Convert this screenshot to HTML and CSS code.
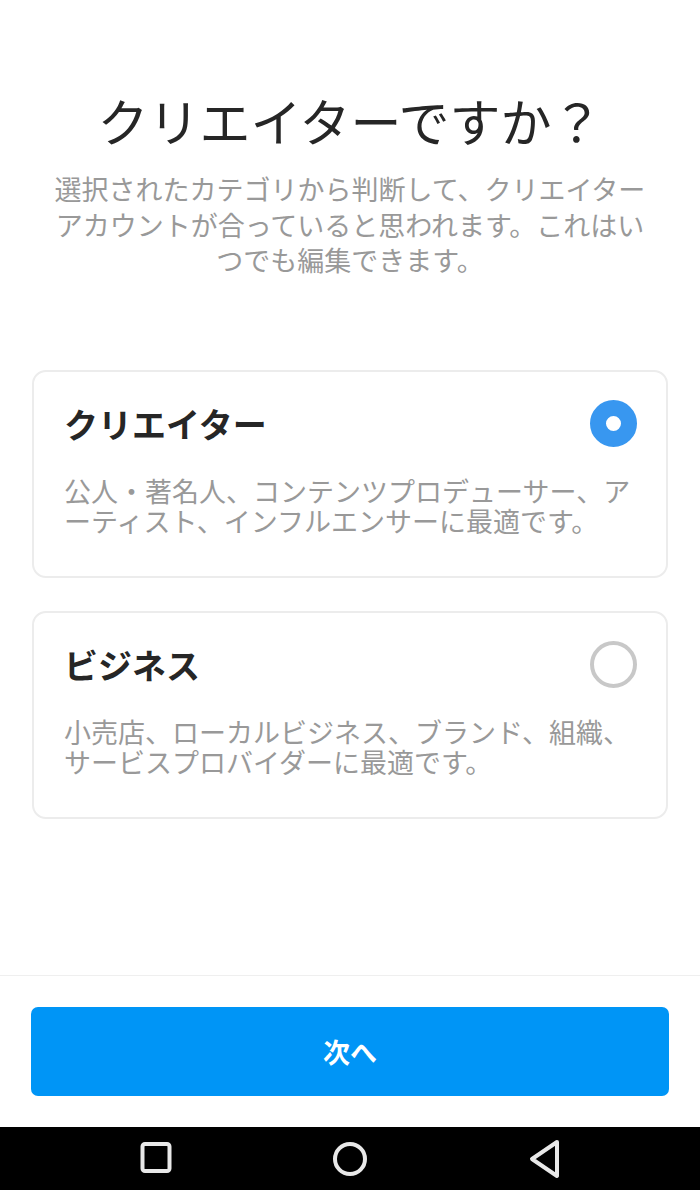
FILE: index.html
```html
<!DOCTYPE html>
<html lang="ja">
<head>
  <meta charset="UTF-8" />
  <meta name="viewport" content="width=device-width, initial-scale=1.0"/>
  <title>クリエイターですか？</title>
  <link rel="stylesheet" href="styles.css">
</head>
<body>

<div class="screen">
  <main class="content">
    <h1 class="title">クリエイターですか？</h1>
    <p class="lead">選択されたカテゴリから判断して、クリエイターアカウントが合っていると思われます。これはいつでも編集できます。</p>

    <div class="options">
      <label class="option">
        <div class="option-head">
          <span class="option-name">クリエイター</span>
          <span class="radio checked"></span>
        </div>
        <p class="option-desc">公人・著名人、コンテンツプロデューサー、アーティスト、インフルエンサーに最適です。</p>
      </label>

      <label class="option">
        <div class="option-head">
          <span class="option-name">ビジネス</span>
          <span class="radio"></span>
        </div>
        <p class="option-desc">小売店、ローカルビジネス、ブランド、組織、サービスプロバイダーに最適です。</p>
      </label>
    </div>
  </main>

  <footer class="footer">
    <button class="next">次へ</button>
  </footer>

  <nav class="navbar">
    <svg width="36" height="36" viewBox="0 0 36 36">
      <rect x="4.5" y="3" width="27" height="27" rx="2.5" fill="none" stroke="#e8e8e8" stroke-width="4"/>
    </svg>
    <svg width="40" height="40" viewBox="0 0 40 40">
      <circle cx="20" cy="20" r="15" fill="none" stroke="#e8e8e8" stroke-width="4"/>
    </svg>
    <svg width="36" height="40" viewBox="0 0 36 40">
      <path d="M31 3 L6 20 L31 37 Z" fill="none" stroke="#e8e8e8" stroke-width="4" stroke-linejoin="round"/>
    </svg>
  </nav>
</div>

</body>
</html>
```

FILE: styles.css
```css
body {
  margin: 0;
  font-family: "Noto Sans CJK JP", "Noto Sans", sans-serif;
  background: #fff;
  color: #262626;
}
.screen {
  display: flex;
  flex-direction: column;
  height: 100vh;
}
.content {
  flex: 1;
  padding: 90px 32px 0;
}
.title {
  margin: 0;
  font-size: 51px;
  font-weight: 400;
  line-height: 60px;
  text-align: center;
}
.lead {
  margin: 21px auto 0;
  width: 600px;
  font-size: 27px;
  line-height: 35.5px;
  color: #999;
  text-align: center;
  line-break: normal;
}
.options {
  margin-top: 92px;
  display: flex;
  flex-direction: column;
  gap: 33px;
}
.option {
  display: block;
  border: 2px solid #ececec;
  border-radius: 14px;
  padding: 29px 29px 40px 30px;
}
.option-head {
  display: flex;
  align-items: center;
  justify-content: space-between;
  height: 46px;
}
.option-name {
  font-size: 34px;
  font-weight: 700;
}
.radio {
  width: 47px;
  height: 47px;
  box-sizing: border-box;
  border: 4px solid #c8c8c8;
  border-radius: 50%;
}
.radio.checked {
  border: 16px solid #3897f0;
  background: #fff;
}
.option-desc {
  margin: 29px 0 0;
  font-size: 27px;
  line-height: 30px;
  color: #999;
  line-break: normal;
}
.footer {
  border-top: 1px solid #efefef;
  padding: 31px 31px;
}
.next {
  display: block;
  width: 100%;
  height: 89px;
  border: none;
  border-radius: 7px;
  background: #0095f6;
  color: #fff;
  font-family: inherit;
  font-size: 27px;
  font-weight: 700;
}
.navbar {
  height: 63px;
  background: #000;
  display: flex;
  align-items: center;
  justify-content: center;
  gap: 156px;
}
```
